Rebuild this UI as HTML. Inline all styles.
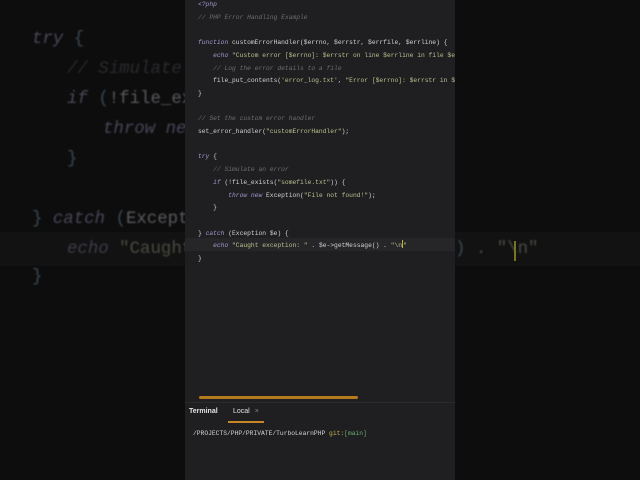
<!DOCTYPE html>
<html><head><meta charset="utf-8"><style>
*{margin:0;padding:0;box-sizing:border-box}
body{width:640px;height:480px;background:#0d0d0d;overflow:hidden;position:relative;font-family:"Liberation Mono",monospace}
.bl{position:absolute;font-size:17.4px;white-space:pre;color:#5a5b5e;filter:blur(0.7px);line-height:20px}
.bgband{position:absolute;left:0;top:232px;width:640px;height:34px;background:#121212}
.panel{position:absolute;left:185px;top:0;width:270px;height:480px;background:#1f1f21;overflow:hidden}
.code{position:absolute;left:13px;top:-1px;font-size:6.3px;line-height:12.7px;white-space:pre;color:#d2d2d2;filter:blur(0.2px)}
.k{color:#a496cf;font-style:italic}
.c{color:#6c6d72;font-style:italic}
.s{color:#b8c08e}
.hl{position:absolute;left:0;top:238px;width:270px;height:13px;background:#262628}
.term{position:absolute;left:0;top:402px;width:270px;height:78px;background:#1f1f21;border-top:1px solid #2b2b2e}
</style></head><body>
<div class="bgband"></div>
<div class="bl" style="left:32px;top:30px;color:#4a4a5a"><i>try</i> <span style="color:#3d4a55">{</span></div>
<div class="bl" style="left:67px;top:60px;color:#2a2b2e"><i>// Simulate an error</i></div>
<div class="bl" style="left:67px;top:90px;color:#5a5b5e"><i style="color:#4a4a5a">if</i> <span style="color:#3d4a55">(</span>!file_exists</div>
<div class="bl" style="left:103px;top:120px;color:#48475a"><i>throw new</i></div>
<div class="bl" style="left:67px;top:150px;color:#3d4a55">}</div>
<div class="bl" style="left:32px;top:210px;color:#5a5b5e"><span style="color:#3d4a55">}</span> <i style="color:#48475a">catch</i> <span style="color:#3d4a55">(</span>Exception $e</div>
<div class="bl" style="left:67px;top:240px;color:#4a4c42"><i style="color:#3e3d4a">echo</i> "Caught exception</div>
<div class="bl" style="left:455px;top:240px;color:#3d4a55">) . <span style="color:#4a4c42">"\n"</span></div>
<div style="position:absolute;left:514px;top:241px;width:2px;height:20px;background:#7a7420"></div>
<div class="bl" style="left:32px;top:268px;color:#3d4a55">}</div>
<div class="panel">
<div class="hl"></div>
<div class="code"><span class="k">&lt;?php</span>
<span class="c">// PHP Error Handling Example</span>

<span class="k">function</span> customErrorHandler($errno, $errstr, $errfile, $errline) {
    <span class="k">echo</span> <span class="s">"Custom error [$errno]: $errstr on line $errline in file $errfile"</span>;
    <span class="c">// Log the error details to a file</span>
    file_put_contents(<span class="s">'error_log.txt'</span>, <span class="s">"Error [$errno]: $errstr in $errfile"</span>);
}

<span class="c">// Set the custom error handler</span>
set_error_handler(<span class="s">"customErrorHandler"</span>);

<span class="k">try</span> {
    <span class="c">// Simulate an error</span>
    <span class="k">if</span> (!file_exists(<span class="s">"somefile.txt"</span>)) {
        <span class="k">throw new</span> Exception(<span class="s">"File not found!"</span>);
    }

} <span class="k">catch</span> (Exception $e) {
    <span class="k">echo</span> <span class="s">"Caught exception: "</span> . $e-&gt;getMessage() . <span class="s">"\n</span><span style="display:inline-block;width:1px;height:8px;background:#c9b43a;vertical-align:-1px"></span><span class="s">"</span>
}</div>
<div style="position:absolute;left:14px;top:396px;width:159px;height:3px;border-radius:2px;background:#b57a1e"></div>
<div class="term">
<div style="position:absolute;left:4px;top:5px;font-family:'Liberation Sans',sans-serif;font-size:7px;font-weight:bold;color:#dfe1e5">Terminal</div>
<div style="position:absolute;left:48px;top:5px;font-family:'Liberation Sans',sans-serif;font-size:7px;color:#dfe1e5">Local <span style="color:#888;margin-left:3px">×</span></div>
<div style="position:absolute;left:43px;top:18px;width:36px;height:2px;background:#c8882a"></div>
<div style="position:absolute;left:8px;top:27px;font-size:6.3px;color:#d2d2d2;white-space:pre">/PROJECTS/PHP/PRIVATE/TurboLearnPHP <span style="color:#c5b24e">git:</span><span style="color:#6aab73">[main]</span></div>
</div>
</div>
</body></html>
